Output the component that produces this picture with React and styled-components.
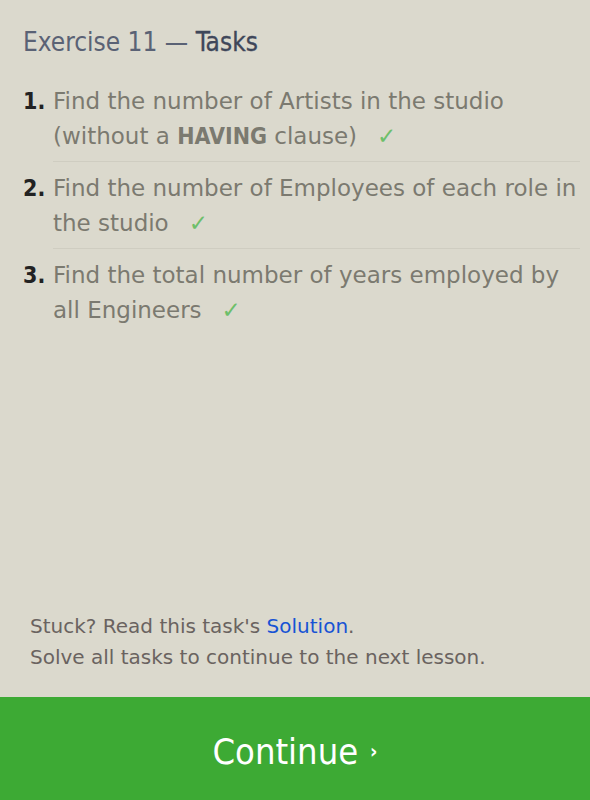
import React from "react";
import styled, { createGlobalStyle } from "styled-components";

const Global = createGlobalStyle`
  html, body { margin: 0; padding: 0; }
  body {
    background: #dbd9cd;
    font-family: "DejaVu Sans", sans-serif;
  }
`;

const Page = styled.div`
  height: 800px;
  display: flex;
  flex-direction: column;
`;

const Content = styled.div`
  flex: 1;
  padding: 26px 10px 0 23px;
`;

const Title = styled.h1`
  margin: 0 0 26px;
  font-family: "DejaVu Sans Condensed", sans-serif;
  font-size: 26px;
  font-weight: normal;
  color: #5a6275;
  line-height: 32px;
`;

const Strong = styled.span`
  color: #3f475a;
  -webkit-text-stroke: 0.3px #3f475a;
`;

const TaskList = styled.ol`
  margin: 0;
  padding: 0;
  list-style: none;
`;

const Task = styled.li`
  display: flex;
  font-size: 23px;
  line-height: 35px;
`;

const Num = styled.span`
  width: 30px;
  flex-shrink: 0;
  color: #222222;
  font-family: "DejaVu Sans Condensed", sans-serif;
  font-weight: bold;
`;

const Body = styled.div`
  flex: 1;
  color: #7b7a70;
  padding-bottom: 7px;
  border-bottom: ${(p) => (p.$last ? "none" : "1px solid #cfcdc1")};
  margin-bottom: 9px;
`;

const Bold = styled.b`
  font-family: "DejaVu Sans Condensed", sans-serif;
  font-weight: bold;
`;

const Check = styled.span`
  color: #6dbf6a;
  margin-left: 20px;
`;

const Notes = styled.div`
  padding: 0 20px 24px 30px;
  font-size: 20px;
  line-height: 31px;
  color: #6a6360;
`;

const Link = styled.a`
  color: #1753d4;
  text-decoration: none;
`;

const ContinueBar = styled.button`
  height: 103px;
  padding-top: 6px;
  border: none;
  background: #3daa34;
  color: #ffffff;
  font-family: "DejaVu Sans Condensed", sans-serif;
  font-size: 36px;
  display: flex;
  align-items: center;
  justify-content: center;
  gap: 12px;
  cursor: pointer;
`;

const Arrow = styled.span`
  font-size: 20px;
  font-weight: bold;
`;

const tasks = [
  <>Find the number of Artists in the studio (without a <Bold>HAVING</Bold> clause)</>,
  <>Find the number of Employees of each role in the studio</>,
  <>Find the total number of years employed by all Engineers</>,
];

export default function App() {
  return (
    <Page>
      <Global />
      <Content>
        <Title>
          Exercise 11 — <Strong>Tasks</Strong>
        </Title>
        <TaskList>
          {tasks.map((t, i) => (
            <Task key={i}>
              <Num>{i + 1}.</Num>
              <Body $last={i === tasks.length - 1}>
                {t}
                <Check>✓</Check>
              </Body>
            </Task>
          ))}
        </TaskList>
      </Content>
      <Notes>
        Stuck? Read this task's <Link href="#">Solution</Link>.
        <br />
        Solve all tasks to continue to the next lesson.
      </Notes>
      <ContinueBar>
        Continue <Arrow>›</Arrow>
      </ContinueBar>
    </Page>
  );
}
